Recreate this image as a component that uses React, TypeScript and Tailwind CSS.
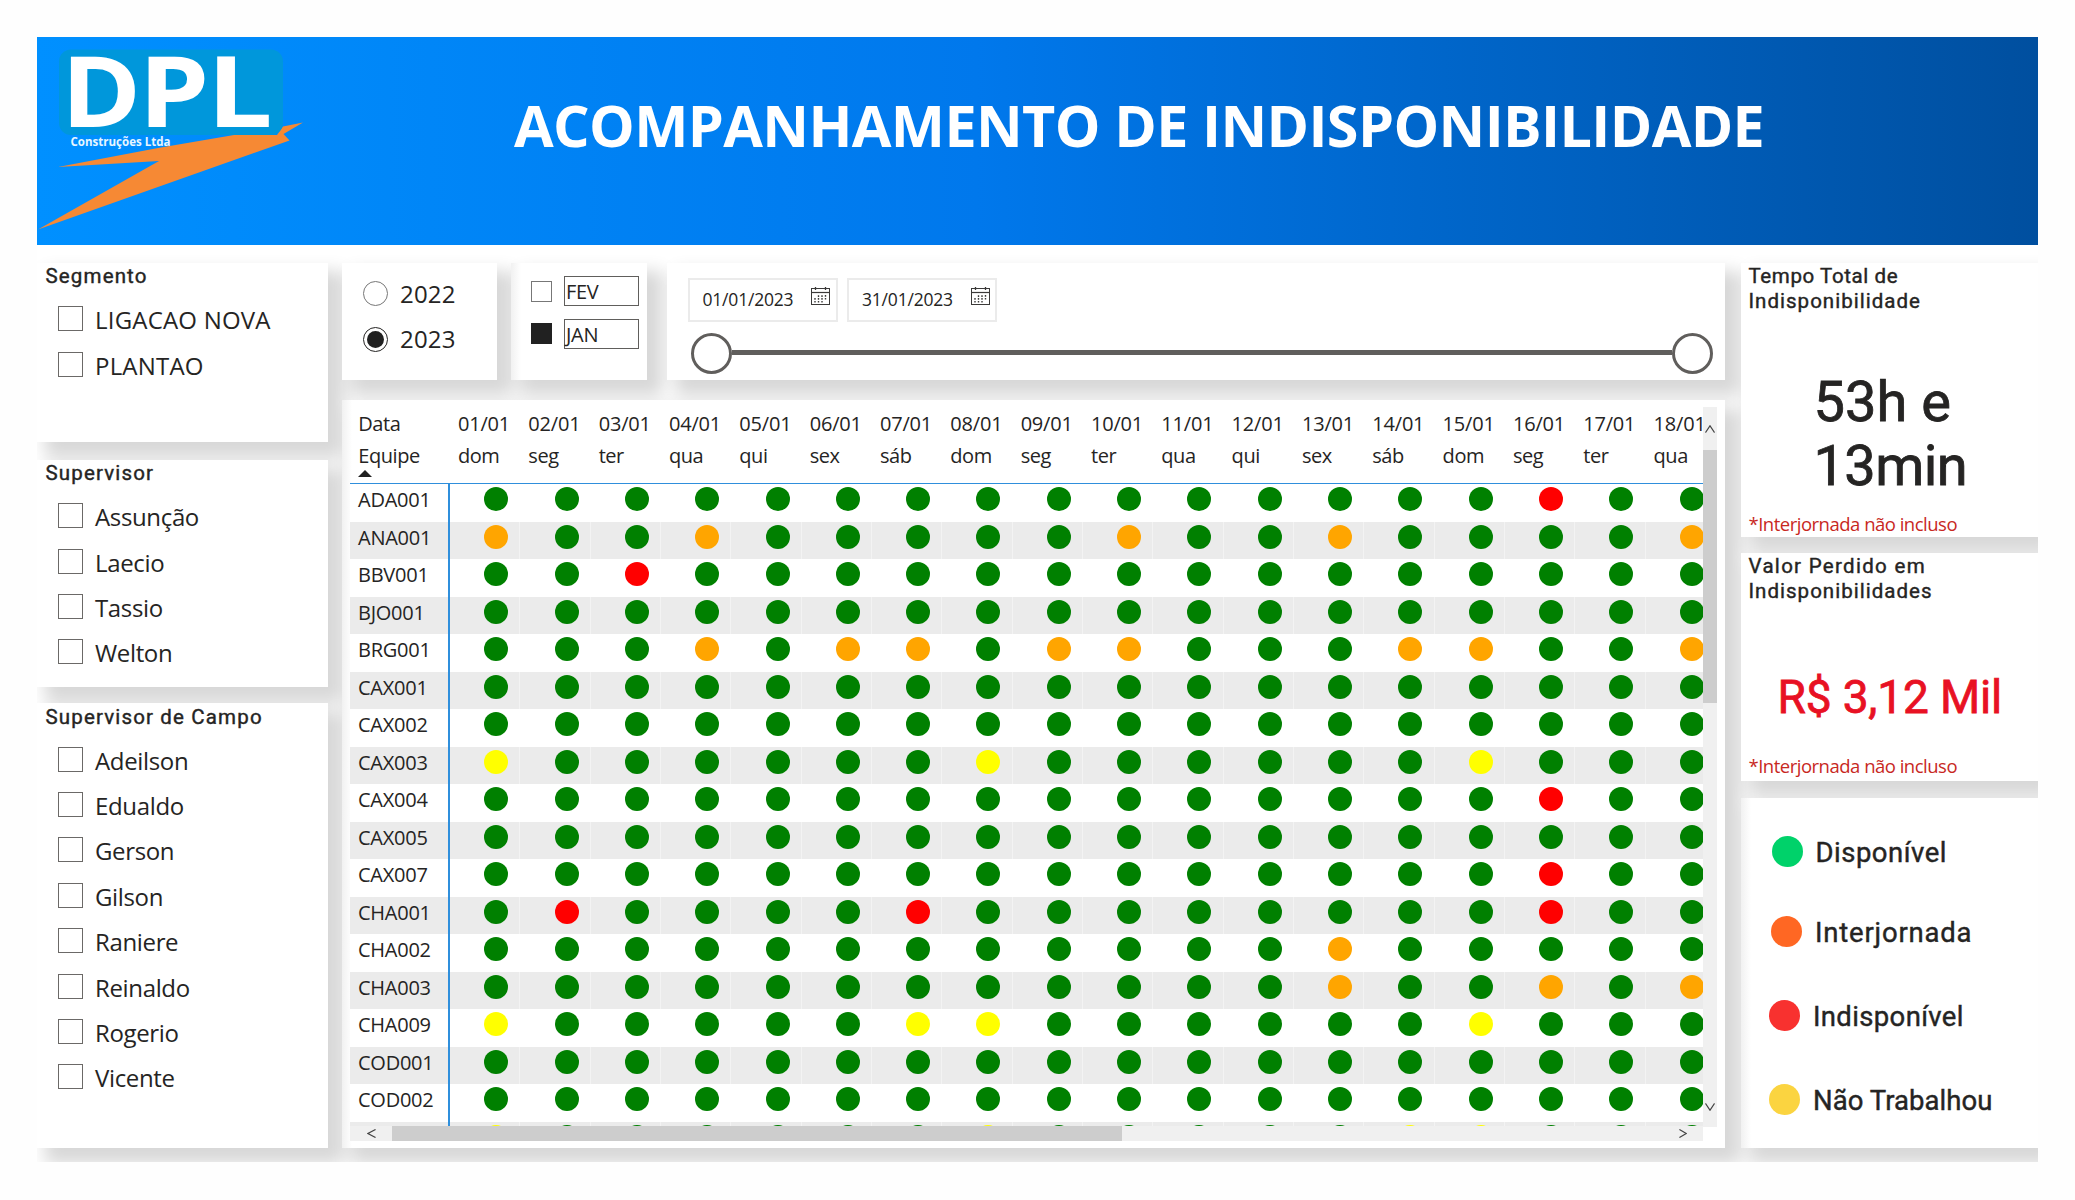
import React from 'react'

const shadow = 'shadow-[12px_12px_16px_4px_rgba(0,0,0,0.155)]'
const card = `bg-white ${shadow}`
const shadedCard = `bg-linear-[90deg,#f1f1f1_0px,#ffffff_10px] ${shadow}`
const din = 'font-[Roboto,sans-serif] font-normal [-webkit-text-stroke:0.4px_currentColor]'
const dinLarge = 'font-[Roboto,sans-serif] font-normal [-webkit-text-stroke:0.8px_currentColor]'

const days = ['dom', 'seg', 'ter', 'qua', 'qui', 'sex', 'sáb']

const colors: Record<string, string> = {
  g: 'bg-[#008000]',
  o: 'bg-[#ffa500]',
  r: 'bg-[#ff0000]',
  y: 'bg-[#ffff00]',
}

const teams: [string, string][] = [
  ['ADA001', 'gggggggggggggggrgg'],
  ['ANA001', 'oggogggggoggoggggo'],
  ['BBV001', 'ggrggggggggggggggg'],
  ['BJO001', 'gggggggggggggggggg'],
  ['BRG001', 'gggogoogoogggooggo'],
  ['CAX001', 'gggggggggggggggggg'],
  ['CAX002', 'gggggggggggggggggg'],
  ['CAX003', 'yggggggyggggggyggg'],
  ['CAX004', 'gggggggggggggggrgg'],
  ['CAX005', 'gggggggggggggggggg'],
  ['CAX007', 'gggggggggggggggrgg'],
  ['CHA001', 'grggggrggggggggrgg'],
  ['CHA002', 'ggggggggggggoggggg'],
  ['CHA003', 'ggggggggggggoggogo'],
  ['CHA009', 'ygggggyyggggggyggg'],
  ['COD001', 'gggggggggggggggggg'],
  ['COD002', 'gggggggggggggggggg'],
  ['', 'yggggggygggggyyggg'],
]

function Logo() {
  return (
    <svg className="h-[208px] w-[270px] shrink-0" viewBox="37 37 270 208">
      <polygon
        fill="#f68934"
        points="303,122.5 283,126.5 277,135 234,135 158,148 58,167 159,161 38,229.5 289.5,140.5 283.5,134"
      />
      <rect x="59" y="49.5" width="224" height="85.5" rx="12" fill="#0097db" />
      <g fill="#fff" fontFamily="'Open Sans', sans-serif" fontWeight="700" fontSize="99">
        <text transform="translate(61.2 127.3) scale(1.09 1)">D</text>
        <text transform="translate(138.5 127.3) scale(1.14 1)">P</text>
        <text transform="translate(206.7 127.3) scale(1.18 1)">L</text>
      </g>
      <text
        x="70.5"
        y="145.7"
        fill="#e8f6ff"
        fontFamily="'Open Sans', sans-serif"
        fontWeight="700"
        fontSize="11.5"
        textLength="100"
      >
        Construções Ltda
      </text>
    </svg>
  )
}

function Slicer({ title, items, className }: { title: string; items: string[]; className: string }) {
  return (
    <div className={`${card} ${className}`}>
      <h2 className={`${din} mb-[7px] h-[26px] pl-[8.5px] text-[20.5px] leading-[26px] tracking-[1.15px]`}>{title}</h2>
      {items.map((t) => (
        <div key={t} className="flex h-[45.4px] items-center gap-[12.5px] pl-[20.5px]">
          <span className="size-[25px] shrink-0 border border-[#6b6967]" />
          <span
            className={
              t === t.toUpperCase()
                ? 'pt-[3px] text-[24px] leading-[30px] tracking-[0.2px]'
                : 'pt-[3px] text-[24px] leading-[30px] tracking-[-0.35px]'
            }
          >
            {t}
          </span>
        </div>
      ))}
    </div>
  )
}

function Radio({ label, on }: { label: string; on?: boolean }) {
  return (
    <div className="flex h-[45.5px] items-center gap-[12px] pl-[21px]">
      <span
        className={
          on
            ? 'flex size-[25px] items-center justify-center rounded-full border-[1.5px] border-[#252423]'
            : 'flex size-[25px] items-center justify-center rounded-full border border-[#777]'
        }
      >
        {on && <span className="size-[17px] rounded-full bg-[#212121]" />}
      </span>
      <span className="text-[24px] leading-[30px] tracking-[0.2px]">{label}</span>
    </div>
  )
}

function Month({ label, on }: { label: string; on?: boolean }) {
  return (
    <div className="flex h-[30px] items-center gap-[12px]">
      <span className={on ? 'size-[21px] bg-[#212121]' : 'size-[21px] border border-[#777]'} />
      <span className="h-[30px] w-[75px] border border-[#605e5c] pl-[1px] text-[20px] leading-[30px] tracking-[-0.3px]">
        {label}
      </span>
    </div>
  )
}

function DateBox({ label }: { label: string }) {
  return (
    <div className="flex h-[44px] w-[150px] items-center justify-between border-2 border-[#ebebeb] pr-[5.5px] pl-[13px]">
      <span className="pb-[2px] text-[17.5px] leading-[24px] tracking-[-0.2px]">{label}</span>
      <svg className="mb-[8px] h-[18px] w-[19px]" viewBox="0 0 19 18" fill="none" stroke="#3b3a39">
        <rect x="0.5" y="1.5" width="18" height="16" />
        <path d="M0 5.5H19" strokeWidth="1.2" />
        <path d="M4.5 0V3M14.5 0V3" strokeWidth="1.3" />
        <path d="M4 15.5V10M7.5 15.5V7.5M11 15.5V7.5M14.5 12.5V7.5" strokeWidth="1.4" strokeDasharray="1.6 1.2" />
      </svg>
    </div>
  )
}

function Chevron({ d, className }: { d: string; className: string }) {
  return (
    <svg className={className} viewBox="0 0 10 10" fill="none" stroke="#444" strokeWidth="1.3" preserveAspectRatio="none">
      <path d={d} />
    </svg>
  )
}

function Matrix() {
  return (
    <div className={`${shadedCard} h-[748px] w-[1383px] pt-[7px] pl-[8px]`}>
      <div className="flex">
        <div className="h-[719px] w-[1353px] overflow-hidden">
          <div className="mb-[0.7px] flex h-[76.8px] w-[1366px] border-b border-[#2f8fdc] pt-[1px] text-[20px] leading-[32px] tracking-[-0.45px]">
            <div className="w-[100px] shrink-0 pl-[8.3px]">
              <div>Data</div>
              <div>Equipe</div>
              <div className="-mt-[2px] size-0 border-x-[7px] border-b-[7px] border-x-transparent border-b-[#212121]" />
            </div>
            {teams[0][1].split('').map((_, i) => (
              <div key={i} className="w-[70.33px] shrink-0 pl-[8px]">
                <div className="tracking-[-0.2px]">{String(i + 1).padStart(2, '0')}/01</div>
                <div>{days[i % 7]}</div>
              </div>
            ))}
          </div>
          {teams.map(([name, row], r) => (
            <div key={r} className={r % 2 ? 'flex h-[37.5px] w-[1366px] bg-[#ebebeb]' : 'flex h-[37.5px] w-[1366px] bg-white'}>
              <div className="w-[100px] shrink-0 border-r-2 border-[#2f8fdc] pl-[8px] text-[20px] leading-[31px] tracking-[-0.25px]">
                {name}
              </div>
              {row.split('').map((c, i) => (
                <div key={i} className="w-[70.33px] shrink-0 border-r border-white/40 pt-[2.8px] pl-[34.2px]">
                  <div className={`size-[24px] rounded-full ${colors[c]}`} />
                </div>
              ))}
            </div>
          ))}
        </div>
        <div className="flex h-[720px] w-[14px] flex-col bg-[#f0f0f0]">
          <div className="flex h-[43px] items-center justify-center">
            <Chevron className="h-[8px] w-[10px]" d="M0.5 9.5L5 1L9.5 9.5" />
          </div>
          <div className="h-[253px] bg-[#cdcdcd]" />
          <div className="flex flex-1 items-end justify-center pb-[16px]">
            <Chevron className="h-[8px] w-[10px]" d="M0.5 0.5L5 9L9.5 0.5" />
          </div>
        </div>
      </div>
      <div className="-mt-px flex h-[15px] w-[1353px] items-center bg-[#f0f0f0]">
        <div className="flex w-[42px] justify-center">
          <Chevron className="h-[9px] w-[9px]" d="M9.5 0.5L1 5L9.5 9.5" />
        </div>
        <div className="h-[15px] w-[730px] bg-[#cdcdcd]" />
        <div className="flex flex-1 justify-end pr-[16px]">
          <Chevron className="h-[9px] w-[8px]" d="M0.5 0.5L9 5L0.5 9.5" />
        </div>
      </div>
    </div>
  )
}

function Legend({ color, label, className }: { color: string; label: string; className: string }) {
  return (
    <div className={`flex h-[31px] items-center gap-[13px] ${className}`}>
      <span className={`size-[31px] rounded-full ${color}`} />
      <span className={`${din} pt-[3px] text-[27.5px] leading-[32px]`}>{label}</span>
    </div>
  )
}

export default function App() {
  return (
    <div className="h-[1200px] w-[2075px] overflow-hidden bg-[#fefefe] pt-[37px] pl-[37px] font-['Open_Sans',sans-serif] text-[#252423]">
      <div className="h-[1125px] w-[2000.5px] overflow-hidden bg-white">
        <header className="flex h-[207.5px] bg-linear-[90deg,#0090ff_0%,#0078ec_47%,#004f9f_100%]">
          <Logo />
          <h1 className="pt-[48px] pl-[207px] text-[57.5px] leading-[80px] font-bold tracking-[-0.63px] whitespace-nowrap text-white">
            ACOMPANHAMENTO DE INDISPONIBILIDADE
          </h1>
        </header>

        <div className="mt-[18.5px] flex">
          <div className="flex w-[291px] shrink-0 flex-col">
            <Slicer className="h-[179px]" title="Segmento" items={['LIGACAO NOVA', 'PLANTAO']} />
            <Slicer className="mt-[18px] h-[227px]" title="Supervisor" items={['Assunção', 'Laecio', 'Tassio', 'Welton']} />
            <Slicer
              className="mt-[16px] h-[445px] pt-[0.5px]"
              title="Supervisor de Campo"
              items={['Adeilson', 'Edualdo', 'Gerson', 'Gilson', 'Raniere', 'Reinaldo', 'Rogerio', 'Vicente']}
            />
          </div>

          <div className="ml-[14px] flex w-[1383px] shrink-0 flex-col">
            <div className="mb-[20.5px] flex h-[116.5px]">
              <div className={`${card} w-[155px] pt-[8px]`}>
                <Radio label="2022" />
                <Radio label="2023" on />
              </div>
              <div className={`${shadedCard} ml-[14px] flex w-[136px] flex-col gap-[12.5px] pt-[13px] pl-[20px]`}>
                <Month label="FEV" />
                <Month label="JAN" on />
              </div>
              <div className={`${card} ml-[20px] w-[1058px] pt-[15px] pl-[20.5px]`}>
                <div className="flex gap-[9.5px]">
                  <DateBox label="01/01/2023" />
                  <DateBox label="31/01/2023" />
                </div>
                <div className="mt-[10.5px] ml-[3.5px] flex w-[1021.5px] items-center">
                  <span className="size-[41px] shrink-0 rounded-full border-3 border-[#605e5c] bg-white" />
                  <span className="h-[5px] flex-1 -translate-y-px bg-[#605e5c]" />
                  <span className="size-[41px] shrink-0 rounded-full border-3 border-[#605e5c] bg-white" />
                </div>
              </div>
            </div>
            <Matrix />
          </div>

          <div className="ml-[15.5px] flex w-[297px] shrink-0 flex-col">
            <div className={`${card} flex h-[274px] flex-col`}>
              <h2 className={`${din} pt-[0.5px] pl-[8px] text-[20.5px] leading-[25px] tracking-[1.02px]`}>
                <span className="tracking-[0.6px]">Tempo Total de</span>
                <br />
                Indisponibilidade
              </h2>
              <p className={`${dinLarge} mt-[56px] pl-[73px] text-[56px] leading-[64px]`}>
                53h e<br />
                <span className="tracking-[-0.6px]">13min</span>
              </p>
              <p className="mt-auto pb-[1px] pl-[8px] text-[18.5px] leading-[24px] tracking-[-0.5px] text-[#c8281e]">
                *Interjornada não incluso
              </p>
            </div>
            <div className={`${card} mt-[16px] flex h-[228px] flex-col`}>
              <h2 className={`${din} pt-[1px] pl-[8px] text-[20.5px] leading-[25px] tracking-[1.02px]`}>
                <span className="tracking-[1.3px]">Valor Perdido em</span>
                <br />
                Indisponibilidades
              </h2>
              <p className={`${dinLarge} mt-[63px] pl-[37px] text-[46px] leading-[60px] tracking-[-0.15px] text-[#e81123]`}>
                R$ 3,12 Mil
              </p>
              <p className="mt-auto pb-[3px] pl-[8px] text-[18.5px] leading-[24px] tracking-[-0.5px] text-[#c8281e]">
                *Interjornada não incluso
              </p>
            </div>
            <div className={`${shadedCard} mt-[17px] h-[350px] pt-[37.5px] pl-[28.5px]`}>
              <Legend className="ml-[2.5px] tracking-[0.5px]" color="bg-[#00d26a]" label="Disponível" />
              <Legend className="mt-[49.5px] ml-[2px] tracking-[0.8px]" color="bg-[#ff6723]" label="Interjornada" />
              <Legend className="mt-[53px] tracking-[0.35px]" color="bg-[#f8312f]" label="Indisponível" />
              <Legend className="mt-[53px] tracking-[0.05px]" color="bg-[#fbd440]" label="Não Trabalhou" />
            </div>
          </div>
        </div>
      </div>
    </div>
  )
}
